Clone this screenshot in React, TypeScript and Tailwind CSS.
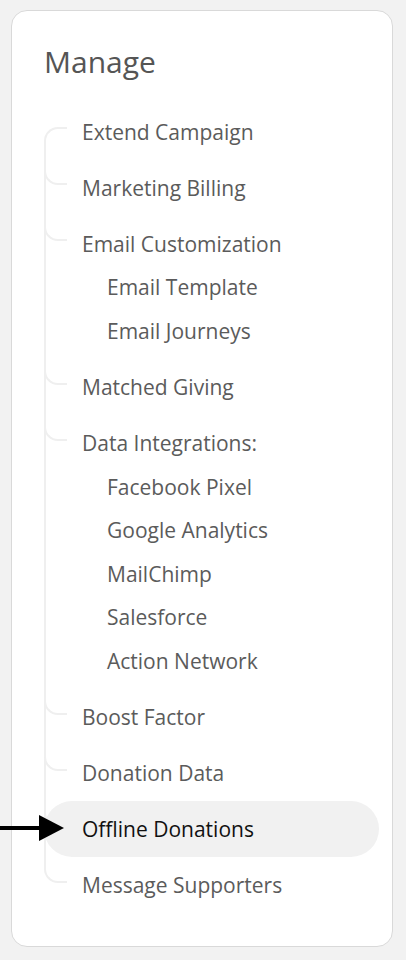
import React from 'react'

type Item = { label: string; children?: string[]; active?: boolean }

const items: Item[] = [
  { label: 'Extend Campaign' },
  { label: 'Marketing Billing' },
  { label: 'Email Customization', children: ['Email Template', 'Email Journeys'] },
  { label: 'Matched Giving' },
  {
    label: 'Data Integrations:',
    children: ['Facebook Pixel', 'Google Analytics', 'MailChimp', 'Salesforce', 'Action Network'],
  },
  { label: 'Boost Factor' },
  { label: 'Donation Data' },
  { label: 'Offline Donations', active: true },
  { label: 'Message Supporters' },
]

function Branch({ first, last }: { first: boolean; last: boolean }) {
  if (first) {
    return (
      <span className="pointer-events-none absolute left-0 top-[24px] bottom-0 w-[23px] rounded-tl-[14px] border-l-2 border-t-2 border-[#efefef]" />
    )
  }
  return (
    <>
      {!last && <span className="pointer-events-none absolute left-0 top-0 bottom-0 w-[2px] bg-[#efefef]" />}
      <span className="pointer-events-none absolute left-0 top-0 h-[26px] w-[23px] rounded-bl-[14px] border-b-2 border-l-2 border-[#efefef]" />
    </>
  )
}

export default function App() {
  return (
    <div
      className="relative min-h-[960px] w-[406px] bg-[#f2f2f2] pt-[10px]"
      style={{ fontFamily: '"Open Sans", "Liberation Sans", sans-serif' }}
    >
      <div className="ml-[11px] h-[937px] w-[382px] rounded-[16px] border border-[#d9d9d9] bg-white pl-[32px] pr-[13px] pt-[31px]">
        <h2 className="mb-[21px] text-[30px] leading-[40px] font-normal text-[#555555]">Manage</h2>
        <ul>
          {items.map((item, i) => (
            <li key={item.label} className="relative">
              <Branch first={i === 0} last={i === items.length - 1} />
              <div
                className={
                  item.active
                    ? 'relative flex h-[56px] items-center rounded-full bg-[#f1f1f1] pl-[38px] pt-[3px] text-[21px] text-[#111111]'
                    : 'relative flex h-[56px] items-center pl-[38px] pt-[3px] text-[21px] text-[#5b5b5b]'
                }
              >
                {item.label}
              </div>
              {item.children && (
                <ul className="-mt-[6px] pb-[6.5px]">
                  {item.children.map((c) => (
                    <li key={c} className="flex h-[43.5px] items-center pl-[63px] pt-[2px] text-[21px] text-[#5b5b5b]">
                      {c}
                    </li>
                  ))}
                </ul>
              )}
            </li>
          ))}
        </ul>
      </div>

      {/* pointer arrow */}
      <svg className="absolute left-0 top-[815px]" width="64" height="26" viewBox="0 0 64 26">
        <rect x="0" y="11" width="42" height="4" fill="#000" />
        <polygon points="39,0 64,13 39,26" fill="#000" />
      </svg>
    </div>
  )
}
